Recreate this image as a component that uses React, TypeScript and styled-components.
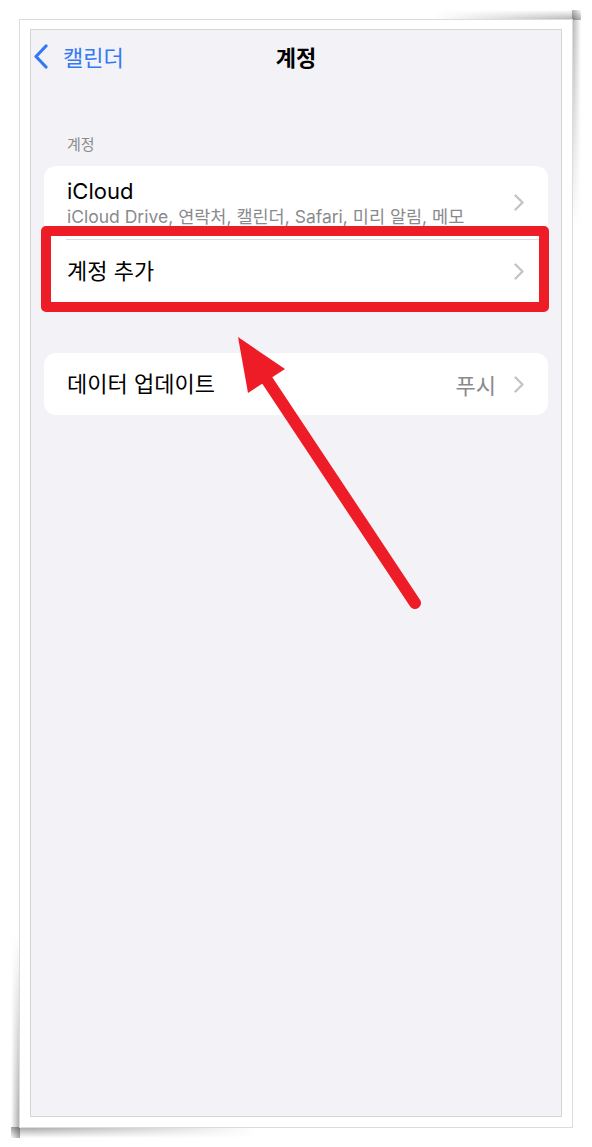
import styled, { createGlobalStyle } from "styled-components";

const GlobalStyle = createGlobalStyle`
  html, body {
    margin: 0;
    padding: 0;
    background: #ffffff;
  }
  body {
    font-family: Inter, "Noto Sans CJK KR", sans-serif;
    -webkit-font-smoothing: antialiased;
  }
`;

const Page = styled.div`
  position: relative;
  z-index: 0;
  width: 592px;
  height: 1147px;
  padding: 19px 0 0 19px;
  box-sizing: border-box;
`;

// curled-page shadows sit outside the top-right and bottom-left corners
const Frame = styled.div`
  position: relative;
  width: 554px;
  height: 1109px;
  box-sizing: border-box;
  border: 1px solid #dcdcdc;
  background: #ffffff;
  padding: 9px 10px 10px 10px;

  &::before,
  &::after {
    content: "";
    position: absolute;
    z-index: -1;
    pointer-events: none;
  }

  &::before {
    top: -10px;
    right: -9px;
    width: 200px;
    height: 300px;
    background:
      linear-gradient(to top, rgba(0, 0, 0, 0.3), rgba(0, 0, 0, 0)) 0 0 / 100% 10px no-repeat,
      linear-gradient(to right, rgba(0, 0, 0, 0.3), rgba(0, 0, 0, 0)) 100% 0 / 9px 100% no-repeat;
    -webkit-mask-image: linear-gradient(to bottom left, #000 4%, transparent 38%);
    mask-image: linear-gradient(to bottom left, #000 4%, transparent 38%);
  }

  &::after {
    bottom: -11px;
    left: -9px;
    width: 320px;
    height: 260px;
    background:
      linear-gradient(to bottom, rgba(0, 0, 0, 0.35), rgba(0, 0, 0, 0)) 0 100% / 100% 11px no-repeat,
      linear-gradient(to left, rgba(0, 0, 0, 0.35), rgba(0, 0, 0, 0)) 0 0 / 9px 100% no-repeat;
    -webkit-mask-image: linear-gradient(to top right, #000 5%, transparent 40%);
    mask-image: linear-gradient(to top right, #000 5%, transparent 40%);
  }
`;

const Screen = styled.div`
  position: relative;
  height: 100%;
  box-sizing: border-box;
  border: 1px solid #d4d4d6;
  background: #f2f2f7;
  overflow: hidden;
`;

const NavBar = styled.div`
  display: grid;
  grid-template-columns: 1fr auto 1fr;
  align-items: center;
  height: 52px;
`;

const BackButton = styled.div`
  display: flex;
  align-items: center;
  gap: 15px;
  padding-left: 3px;
  color: #3478f6;
  font-size: 22px;
`;

const Title = styled.div`
  font-size: 22px;
  font-weight: 700;
  color: #000;
`;

const SectionHeader = styled.div`
  margin: 53px 0 11px 36px;
  font-size: 15px;
  line-height: 20px;
  color: #8a8a8e;
`;

const Group = styled.div<{ $top?: number }>`
  margin: ${(p) => p.$top ?? 0}px 13px 0 13px;
  background: #ffffff;
  border-radius: 12px;
  overflow: hidden;
`;

const Row = styled.div<{ $height: number; $divider?: boolean }>`
  display: flex;
  align-items: center;
  height: ${(p) => p.$height}px;
  margin-left: 22px;
  padding: 0 24px 0 1px;
  border-top: ${(p) => (p.$divider ? "1px solid #dcdce0" : "none")};
`;

const RowText = styled.div`
  flex: 1;
  display: flex;
  flex-direction: column;
  gap: 2px;
  min-width: 0;
`;

const Label = styled.div`
  font-size: 22px;
  line-height: 26px;
  color: #000;
`;

const SubLabel = styled.div`
  font-size: 17.5px;
  line-height: 22px;
  color: #8a8a8e;
  white-space: nowrap;
`;

const Value = styled.div`
  font-size: 22px;
  color: #8a8a8e;
  margin-right: 18px;
`;

const Highlight = styled.div`
  position: absolute;
  left: 10px;
  top: 196px;
  width: 508px;
  height: 86px;
  box-sizing: border-box;
  border: 10px solid #ee1c27;
  border-radius: 5px;
  pointer-events: none;
`;

const ArrowLayer = styled.svg`
  position: absolute;
  inset: 0;
  width: 100%;
  height: 100%;
  pointer-events: none;
`;

function Chevron() {
  return (
    <svg width="10" height="17" viewBox="0 0 10 17">
      <path
        d="M1.5 1.5 L8.5 8.5 L1.5 15.5"
        fill="none"
        stroke="#c4c4c7"
        strokeWidth="2.4"
        strokeLinecap="round"
        strokeLinejoin="round"
      />
    </svg>
  );
}

function BackChevron() {
  return (
    <svg width="14" height="25" viewBox="0 0 14 25">
      <path
        d="M12 2 L2 12.5 L12 23"
        fill="none"
        stroke="#3478f6"
        strokeWidth="3.2"
        strokeLinecap="round"
        strokeLinejoin="round"
      />
    </svg>
  );
}

export default function App() {
  return (
    <>
      <GlobalStyle />
      <Page>
        <Frame>
          <Screen>
            <NavBar>
              <BackButton>
                <BackChevron />
                캘린더
              </BackButton>
              <Title>계정</Title>
              <div />
            </NavBar>

            <SectionHeader>계정</SectionHeader>
            <Group>
              <Row $height={73}>
                <RowText>
                  <Label>iCloud</Label>
                  <SubLabel>iCloud Drive, 연락처, 캘린더, Safari, 미리 알림, 메모</SubLabel>
                </RowText>
                <Chevron />
              </Row>
              <Row $height={62} $divider>
                <RowText>
                  <Label>계정 추가</Label>
                </RowText>
                <Chevron />
              </Row>
            </Group>

            <Group $top={51}>
              <Row $height={62}>
                <RowText>
                  <Label>데이터 업데이트</Label>
                </RowText>
                <Value>푸시</Value>
                <Chevron />
              </Row>
            </Group>

            <Highlight />

            <ArrowLayer>
              <line
                x1="384"
                y1="573"
                x2="232"
                y2="344"
                stroke="#ee1c27"
                strokeWidth="12"
                strokeLinecap="round"
              />
              <polygon points="207,307 254,339 217,363" fill="#ee1c27" />
            </ArrowLayer>
          </Screen>
        </Frame>
      </Page>
    </>
  );
}
